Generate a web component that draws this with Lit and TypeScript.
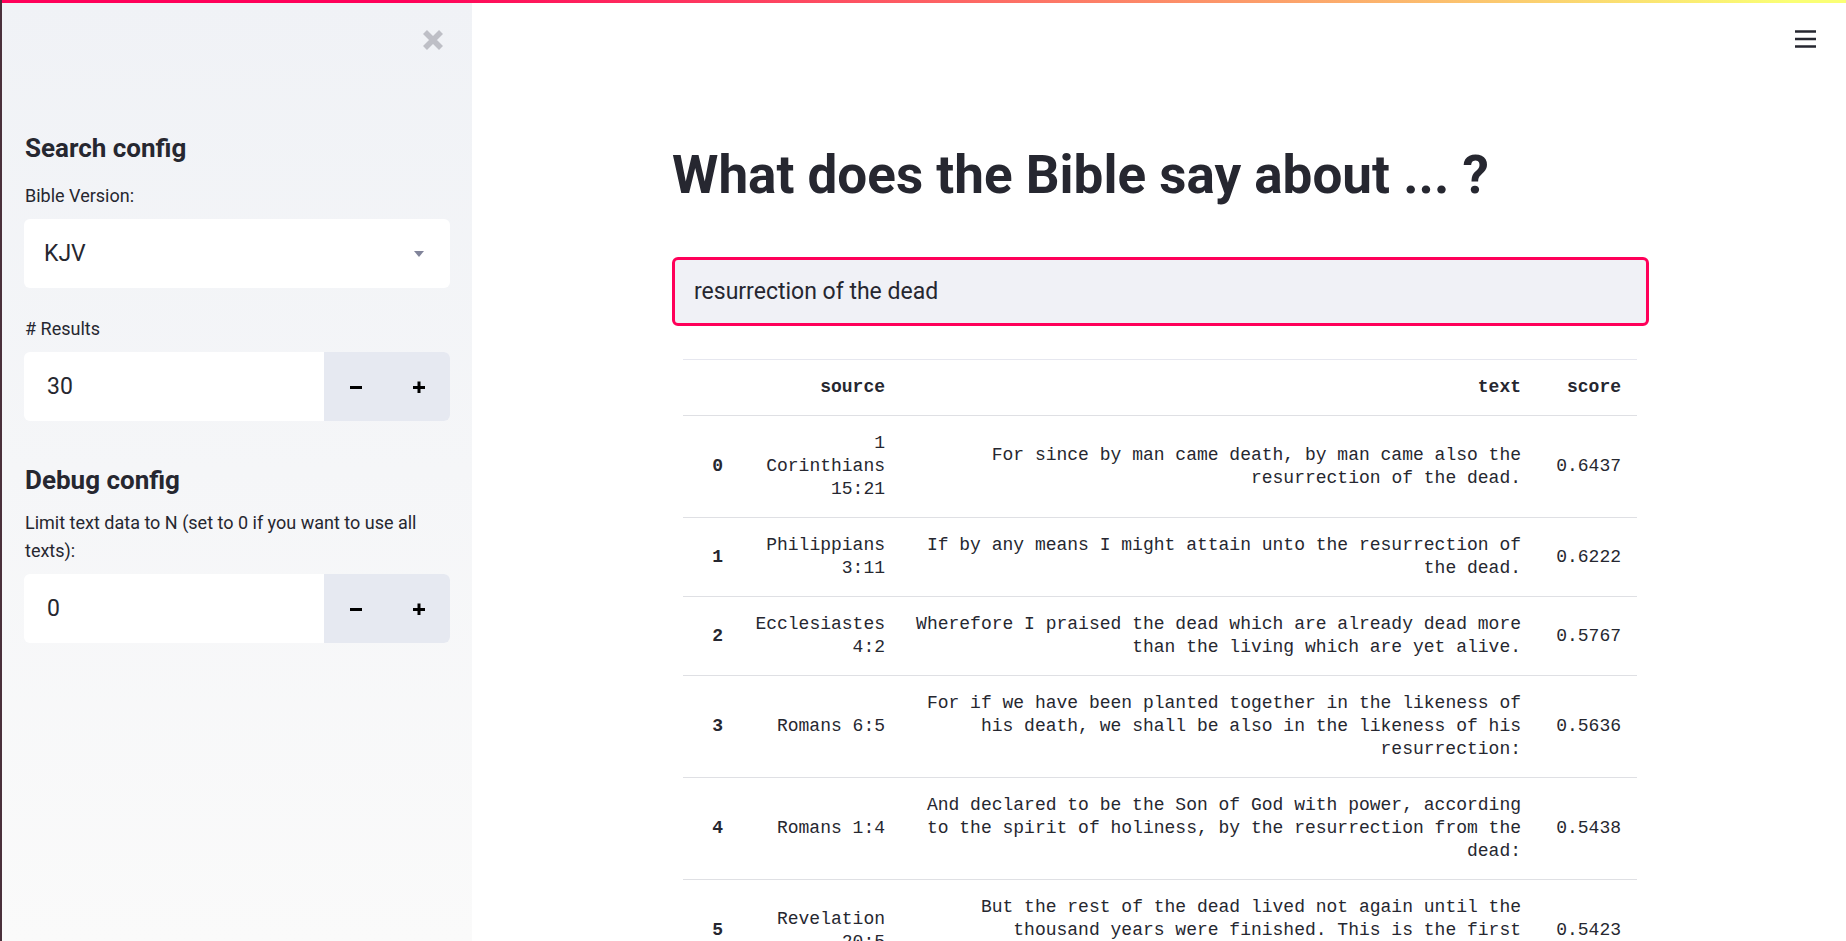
import { LitElement, html, css } from "lit";
import { customElement, property, state } from "lit/decorators.js";

interface Verse {
  source: string;
  text: string;
  score: string;
}

const VERSES: Verse[] = [
  { source: "1 Corinthians 15:21", text: "For since by man came death, by man came also the resurrection of the dead.", score: "0.6437" },
  { source: "Philippians 3:11", text: "If by any means I might attain unto the resurrection of the dead.", score: "0.6222" },
  { source: "Ecclesiastes 4:2", text: "Wherefore I praised the dead which are already dead more than the living which are yet alive.", score: "0.5767" },
  { source: "Romans 6:5", text: "For if we have been planted together in the likeness of his death, we shall be also in the likeness of his resurrection:", score: "0.5636" },
  { source: "Romans 1:4", text: "And declared to be the Son of God with power, according to the spirit of holiness, by the resurrection from the dead:", score: "0.5438" },
  { source: "Revelation 20:5", text: "But the rest of the dead lived not again until the thousand years were finished. This is the first resurrection.", score: "0.5423" },
];

/* Number box with its own minus and plus buttons. */
@customElement("number-field")
export class NumberField extends LitElement {
  @property() label = "";
  @property({ type: Number }) value = 0;

  static styles = css`
    :host {
      display: block;
    }
    .label {
      display: block;
      margin-bottom: 9px;
      padding-left: 1px;
      font-size: 18px;
      line-height: 28px;
    }
    .row {
      display: flex;
      height: 69px;
      border-radius: 6px;
      overflow: hidden;
      background: #fff;
    }
    .input {
      flex: 1;
      min-width: 0;
      box-sizing: border-box;
      padding: 0 23px;
      border: 0;
      outline: 0;
      background: transparent;
      color: inherit;
      font: inherit;
      font-size: 23px;
      appearance: textfield;
    }
    .input::-webkit-inner-spin-button {
      display: none;
    }
    .step {
      display: grid;
      place-items: center;
      width: 63px;
      padding: 0;
      border: 0;
      background: #e6e9f1;
      color: #000;
      cursor: pointer;
    }
  `;

  private step(by: number) {
    this.value = Math.max(0, this.value + by);
  }

  render() {
    return html`
      <label class="label" for="n">${this.label}</label>
      <div class="row">
        <input class="input" id="n" type="number" .value=${String(this.value)}
          @change=${(e: Event) => (this.value = Number((e.target as HTMLInputElement).value))} />
        <button class="step" type="button" aria-label="Decrease" @click=${() => this.step(-1)}>
          <svg width="12" height="12" viewBox="0 0 12 12"><path d="M0 5h12v3H0z" /></svg>
        </button>
        <button class="step" type="button" aria-label="Increase" @click=${() => this.step(1)}>
          <svg width="12" height="12" viewBox="0 0 12 12"><path d="M0 5h12v3H0zM4.5 .5h3V12h-3z" /></svg>
        </button>
      </div>
    `;
  }
}

@customElement("app-root")
export class AppRoot extends LitElement {
  @state() private query = "resurrection of the dead";

  static styles = css`
    :host {
      display: flex;
      position: relative;
      box-sizing: border-box;
      height: 100vh;
      border-left: 2px solid #4a303b;
      overflow: hidden;
      background: #fff;
      color: #262730;
      font-family: Roboto, "Liberation Sans", sans-serif;
    }
    .ribbon {
      position: absolute;
      inset: 0 0 auto;
      height: 3px;
      background: linear-gradient(to right, #ff0059 22%, #faff75 97%);
    }
    .sidebar {
      flex: none;
      box-sizing: border-box;
      width: 470px;
      padding: 30px 22px;
      background: linear-gradient(#f0f2f6, #fafafa);
    }
    .bar {
      display: flex;
      justify-content: flex-end;
      padding-right: 7px;
      margin-bottom: 82px;
    }
    .icon {
      display: block;
      padding: 0;
      border: 0;
      background: none;
      color: inherit;
      cursor: pointer;
    }
    .icon svg {
      display: block;
    }
    .close {
      color: #bebfc6;
    }
    .section {
      margin-bottom: 43px;
    }
    .heading {
      margin: 0 0 13px;
      padding-left: 1px;
      font-size: 26px;
      line-height: 32px;
      font-weight: 700;
    }
    .field {
      padding-top: 5px;
      margin-bottom: 27px;
    }
    .label {
      display: block;
      margin-bottom: 9px;
      padding-left: 1px;
      font-size: 18px;
      line-height: 28px;
    }
    .select-wrap {
      display: grid;
      align-items: center;
    }
    .select-wrap > * {
      grid-area: 1 / 1;
    }
    .select {
      width: 100%;
      height: 69px;
      padding: 0 20px;
      border: 0;
      border-radius: 6px;
      outline: 0;
      background: #fff;
      color: inherit;
      font: inherit;
      font-size: 23px;
      appearance: none;
    }
    .arrow {
      justify-self: end;
      margin-right: 26px;
      fill: #81849a;
      pointer-events: none;
    }
    .main {
      flex: 1;
      min-width: 0;
      overflow-y: auto;
      scrollbar-width: none;
    }
    .toolbar {
      display: flex;
      justify-content: flex-end;
      padding: 30px 30px 0;
    }
    .content {
      max-width: 977px;
      margin: 0 auto;
      padding: 95px 0 80px 3px;
    }
    .title {
      margin: 0 0 50px;
      font-size: 53px;
      line-height: 64px;
      font-weight: 700;
    }
    .search {
      display: block;
      box-sizing: border-box;
      width: 100%;
      height: 69px;
      padding: 0 19px;
      border: 3px solid #ff0059;
      border-radius: 6px;
      outline: 0;
      background: #f0f1f6;
      color: inherit;
      font: inherit;
      font-size: 23px;
    }
    .results {
      margin: 33px 12px 0 11px;
    }
    .table {
      width: 100%;
      table-layout: fixed;
      border-spacing: 0;
      font-family: "Liberation Mono", monospace;
      font-size: 18px;
      line-height: 23px;
      text-align: right;
    }
    .table th,
    .table td {
      padding: 16px 16px 16px 14px;
      border-top: 1px solid #dfe0e4;
    }
    .table thead th {
      border-top-color: #e6e7ef;
    }
    .col-index {
      width: 56px;
    }
    .col-source {
      width: 162px;
    }
    .col-score {
      width: 100px;
    }
  `;

  render() {
    return html`
      <aside class="sidebar">
        <div class="bar">
          <button class="icon close" type="button" aria-label="Close sidebar">
            <svg width="20" height="20" viewBox="0 0 20 20" fill="none" stroke="currentColor" stroke-width="5.6">
              <path d="M2 2 18 18M18 2 2 18" />
            </svg>
          </button>
        </div>
        <section class="section">
          <h2 class="heading">Search config</h2>
          <div class="field">
            <label class="label" for="version">Bible Version:</label>
            <div class="select-wrap">
              <select class="select" id="version"><option>KJV</option></select>
              <svg class="arrow" width="10" height="6" viewBox="0 0 10 6"><path d="M0 0h10L5 6z" /></svg>
            </div>
          </div>
          <number-field label="# Results" .value=${30}></number-field>
        </section>
        <section class="section">
          <h2 class="heading">Debug config</h2>
          <number-field label="Limit text data to N (set to 0 if you want to use all texts):" .value=${0}></number-field>
        </section>
      </aside>
      <main class="main">
        <div class="toolbar">
          <button class="icon" type="button" aria-label="Menu">
            <svg width="21" height="18" viewBox="0 0 21 18" fill="currentColor">
              <path d="M0 .2h21v2.6H0zM0 7.7h21v2.6H0zM0 15.2h21v2.6H0z" />
            </svg>
          </button>
        </div>
        <div class="content">
          <h1 class="title">What does the Bible say about ... ?</h1>
          <input class="search" type="text" aria-label="Topic" .value=${this.query}
            @input=${(e: Event) => (this.query = (e.target as HTMLInputElement).value)} />
          <div class="results">
            <table class="table">
              <colgroup>
                <col class="col-index" /><col class="col-source" /><col /><col class="col-score" />
              </colgroup>
              <thead>
                <tr><th></th><th scope="col">source</th><th scope="col">text</th><th scope="col">score</th></tr>
              </thead>
              <tbody>
                ${VERSES.map((v, i) => html`
                  <tr><th scope="row">${i}</th><td>${v.source}</td><td>${v.text}</td><td>${v.score}</td></tr>
                `)}
              </tbody>
            </table>
          </div>
        </div>
      </main>
      <div class="ribbon"></div>
    `;
  }
}
